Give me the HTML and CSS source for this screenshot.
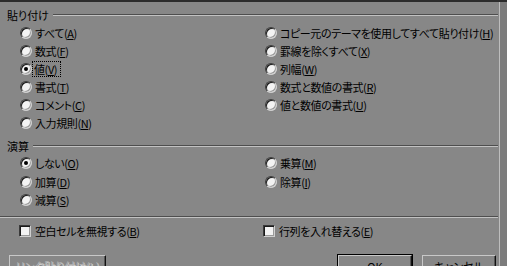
FILE: index.html
```html
<!DOCTYPE html>
<html lang="ja">
<head>
<meta charset="utf-8">
<title>形式を選択して貼り付け</title>
<link rel="stylesheet" href="styles.css">
</head>
<body>
<div class="topbar"></div>
<div class="dialog">
  <div class="legend first"><span class="legend-text">貼り付け</span><div class="rule"></div></div>
  <div class="opts">
    <div class="col">
      <div class="row"><span class="radio"></span><span class="lbl">すべて(<u>A</u>)</span></div>
      <div class="row"><span class="radio"></span><span class="lbl">数式(<u>F</u>)</span></div>
      <div class="row"><span class="radio on"></span><span class="lbl focus">値(<u>V</u>)</span></div>
      <div class="row"><span class="radio"></span><span class="lbl">書式(<u>T</u>)</span></div>
      <div class="row"><span class="radio"></span><span class="lbl">コメント(<u>C</u>)</span></div>
      <div class="row"><span class="radio"></span><span class="lbl">入力規則(<u>N</u>)</span></div>
    </div>
    <div class="col">
      <div class="row"><span class="radio"></span><span class="lbl">コピー元のテーマを使用してすべて貼り付け(<u>H</u>)</span></div>
      <div class="row"><span class="radio"></span><span class="lbl">罫線を除くすべて(<u>X</u>)</span></div>
      <div class="row"><span class="radio"></span><span class="lbl">列幅(<u>W</u>)</span></div>
      <div class="row"><span class="radio"></span><span class="lbl">数式と数値の書式(<u>R</u>)</span></div>
      <div class="row"><span class="radio"></span><span class="lbl">値と数値の書式(<u>U</u>)</span></div>
    </div>
  </div>
  <div class="legend second"><span class="legend-text">演算</span><div class="rule"></div></div>
  <div class="opts ops">
    <div class="col">
      <div class="row"><span class="radio on"></span><span class="lbl">しない(<u>O</u>)</span></div>
      <div class="row"><span class="radio"></span><span class="lbl">加算(<u>D</u>)</span></div>
      <div class="row"><span class="radio"></span><span class="lbl">減算(<u>S</u>)</span></div>
    </div>
    <div class="col">
      <div class="row"><span class="radio"></span><span class="lbl">乗算(<u>M</u>)</span></div>
      <div class="row"><span class="radio"></span><span class="lbl">除算(<u>I</u>)</span></div>
    </div>
  </div>
  <div class="separator"></div>
  <div class="checks">
    <div class="row"><span class="check"></span><span class="lbl">空白セルを無視する(<u>B</u>)</span></div>
    <div class="row"><span class="check"></span><span class="lbl">行列を入れ替える(<u>E</u>)</span></div>
  </div>
  <div class="buttons">
    <div class="btn disabled">リンク貼り付け(<u>L</u>)</div>
    <div class="spacer"></div>
    <div class="btn default">OK</div>
    <div class="btn">キャンセル</div>
  </div>
</div>
</body>
</html>
```

FILE: styles.css
```css
html, body {
  margin: 0;
  padding: 0;
}
body {
  width: 507px;
  height: 266px;
  overflow: hidden;
  background: #7c7c7c;
  font-family: "Noto Sans CJK JP", "Noto Sans", sans-serif;
  font-size: 11px;
  color: #000;
  font-feature-settings: "palt";
}
.topbar {
  height: 2px;
  background: #2c2c2c;
}
.dialog {
  width: 500px;
  height: 264px;
  background: #878787;
  border-right: 1px solid #bdbdbd;
  box-sizing: border-box;
  overflow: hidden;
}
.legend {
  display: flex;
  align-items: center;
  height: 14px;
  line-height: 14px;
  padding-left: 7px;
}
.legend.first { margin-top: 6px; }
.legend.second { margin-top: 7px; }
.rule {
  flex: 1;
  height: 0;
  border-top: 1px solid #4e4e4e;
  border-bottom: 1px solid #c2c2c2;
  margin-left: 4px;
  margin-right: 1px;
}
.opts {
  display: grid;
  grid-template-columns: 245px 1fr;
  margin-left: 20px;
  margin-top: 2px;
}
.opts.ops { margin-top: 1px; }
.row {
  display: flex;
  align-items: center;
  height: 18px;
  line-height: 14px;
  white-space: nowrap;
}
.ops .row { height: 18.4px; }
.radio {
  width: 12px;
  height: 12px;
  box-sizing: border-box;
  border-radius: 50%;
  border: 1px solid;
  border-color: #3a3a3a #cfcfcf #cfcfcf #3a3a3a;
  background: #f3f3f3;
  box-shadow: inset 1px 1px 0 #1a1a1a, inset -1px -1px 0 #9a9a9a;
  flex: none;
  display: flex;
  align-items: center;
  justify-content: center;
}
.radio.on::after {
  content: "";
  width: 4px;
  height: 4px;
  border-radius: 50%;
  background: #000;
}
.lbl {
  margin-left: 2px;
  padding: 0 1px;
  letter-spacing: -0.4px;
}
.lbl.focus {
  outline: 1px dotted #000;
  outline-offset: 0;
  margin-left: 1px;
  padding: 0 3px 0 1px;
}
u {
  text-decoration: underline;
  text-underline-offset: 1px;
}
.separator {
  height: 0;
  margin-top: 7px;
  margin-right: 1px;
  border-top: 1px solid #4e4e4e;
  border-bottom: 1px solid #c2c2c2;
}
.checks {
  display: grid;
  grid-template-columns: 244px 1fr;
  margin-left: 19px;
  margin-top: 6px;
}
.checks .row { height: 14px; }
.check {
  width: 12px;
  height: 12px;
  box-sizing: border-box;
  border: 1px solid;
  border-color: #3a3a3a #cfcfcf #cfcfcf #3a3a3a;
  box-shadow: inset 1px 1px 0 #1a1a1a, inset -1px -1px 0 #9a9a9a;
  background: #f3f3f3;
  flex: none;
}
.checks .lbl { margin-left: 3px; }
.buttons {
  display: flex;
  margin-top: 17px;
  padding-left: 9px;
  padding-right: 3px;
}
.spacer { flex: 1; }
.btn {
  width: 74px;
  height: 23px;
  box-sizing: border-box;
  border: 1px solid;
  border-color: #c8c8c8 #111 #111 #c8c8c8;
  box-shadow: inset -1px -1px 0 #555;
  text-align: center;
  line-height: 21px;
  flex: none;
  margin-left: 10px;
}
.btn.default {
  outline: 1px solid #000;
  border-color: #c8c8c8 #111 #111 #c8c8c8;
}
.btn.disabled {
  width: 97px;
  margin-left: 0;
  color: #b2b2b2;
  text-shadow: 1px 1px 0 #d0d0d0;
}
.btn.disabled u { text-decoration-color: #b2b2b2; }
```
